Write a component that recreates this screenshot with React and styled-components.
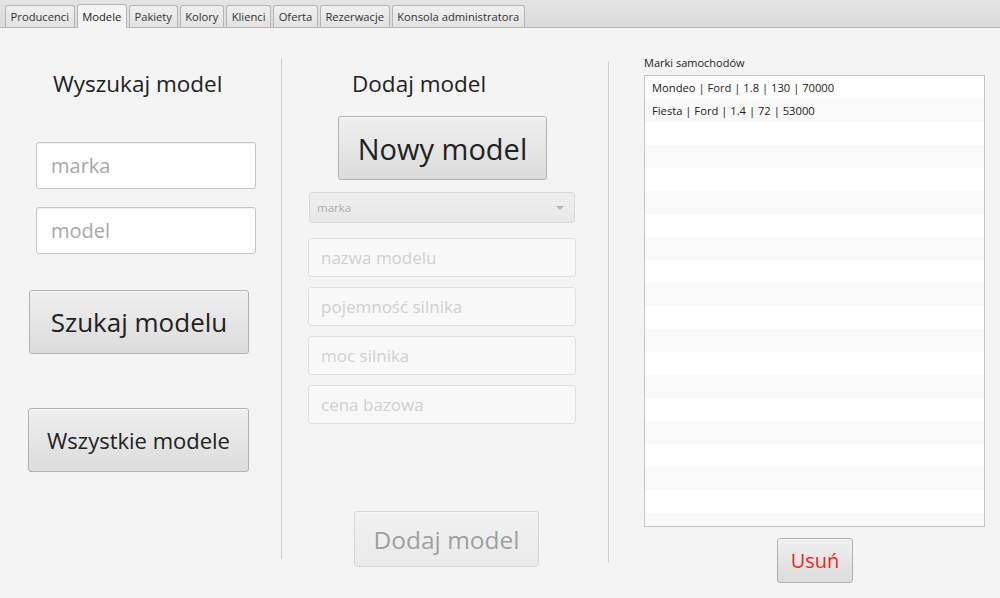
import React from 'react'
import styled, { createGlobalStyle, css } from 'styled-components'

const GlobalStyle = createGlobalStyle`
  html, body {
    margin: 0;
    padding: 0;
    background: #f4f4f4;
    font-family: "Open Sans", "Noto Sans", sans-serif;
    color: #333;
  }
  * { box-sizing: border-box; }
`

const tabs = ['Producenci', 'Modele', 'Pakiety', 'Kolory', 'Klienci', 'Oferta', 'Rezerwacje', 'Konsola administratora']

const rows = [
  'Mondeo | Ford | 1.8 | 130 | 70000',
  'Fiesta | Ford | 1.4 | 72 | 53000',
]

function App() {
  const filler = Array.from({ length: 19 }, (_, i) => i)
  return (
    <Page>
      <GlobalStyle />
      <TabBar>
        {tabs.map((t) => (
          <Tab key={t} active={t === 'Modele'}>{t}</Tab>
        ))}
      </TabBar>
      <Content>
        <LeftCol>
          <Title left={53} top={41}>Wyszukaj model</Title>
          <Field left={36} top={43} h={47} size={20}>marka</Field>
          <Field left={36} top={18} h={47} size={20}>model</Field>
          <Button left={29} top={36} w={220} h={64} size={26}>Szukaj modelu</Button>
          <Button left={28} top={54} w={221} h={64} size={22}>Wszystkie modele</Button>
        </LeftCol>
        <Separator top={30} bottom={38} />
        <MiddleCol>
          <Title left={70} top={41}>Dodaj model</Title>
          <Button left={56} top={17} w={209} h={64} size={29}>Nowy model</Button>
          <Combo>
            <span>marka</span>
            <Arrow />
          </Combo>
          <Disabled>
            <SmallField top={15}>nazwa modelu</SmallField>
            <SmallField top={10}>pojemność silnika</SmallField>
            <SmallField top={10}>moc silnika</SmallField>
            <SmallField top={10}>cena bazowa</SmallField>
          </Disabled>
          <Disabled>
            <Button left={72} top={87} w={185} h={56} size={24.5}>Dodaj model</Button>
          </Disabled>
        </MiddleCol>
        <Separator top={34} bottom={35} />
        <RightCol>
          <ListLabel>Marki samochodów</ListLabel>
          <List>
            {rows.map((r, i) => (
              <Row key={r} odd={i % 2 === 1}>{r}</Row>
            ))}
            {filler.map((i) => (
              <Row key={i} odd={(i + rows.length) % 2 === 1} />
            ))}
          </List>
          <Button left={133} top={11} w={76} h={45} size={20} danger>Usuń</Button>
        </RightCol>
      </Content>
    </Page>
  )
}

export default App

const Page = styled.div`
  width: 1000px;
  height: 598px;
  overflow: hidden;
  background: #f4f4f4;
`

const TabBar = styled.div`
  height: 28px;
  display: flex;
  align-items: flex-end;
  gap: 2px;
  padding-left: 5px;
  background: linear-gradient(#e4e4e4, #dcdcdc);
  border-bottom: 1px solid #b8b8b8;
`

const Tab = styled.div`
  height: 22px;
  padding: 0 4.6px;
  font-size: 11.2px;
  line-height: 21px;
  color: #333;
  border: 1px solid #b5b5b5;
  border-bottom: none;
  border-radius: 3px 3px 0 0;
  background: linear-gradient(#f0f0f0, #e2e2e2);
  ${(p) => p.active && css`
    height: 24px;
    margin-bottom: -1px;
    line-height: 23px;
    background: #f4f4f4;
    color: #222;
  `}
`

const Content = styled.div`
  display: flex;
  height: 569px;
`

const Column = styled.div`
  display: flex;
  flex-direction: column;
  align-items: flex-start;
`

const LeftCol = styled(Column)`
  width: 281px;
`

const MiddleCol = styled(Column)`
  width: 326px;
`

const RightCol = styled(Column)`
  flex: 1;
  padding-left: 35px;
`

const Separator = styled.div`
  width: 1px;
  margin-top: ${(p) => p.top}px;
  margin-bottom: ${(p) => p.bottom}px;
  background: #cfcfcf;
`

const Title = styled.div`
  margin-left: ${(p) => p.left}px;
  margin-top: ${(p) => p.top}px;
  font-size: 22.5px;
  line-height: 30px;
  color: #222;
`

const Field = styled.div`
  margin-left: ${(p) => p.left}px;
  margin-top: ${(p) => p.top}px;
  width: 220px;
  height: ${(p) => p.h}px;
  padding-left: 14px;
  display: flex;
  align-items: center;
  font-size: ${(p) => p.size}px;
  color: #a8a8a8;
  background: #fff;
  border: 1px solid #c4c4c4;
  border-radius: 3px;
  box-shadow: inset 0 1px 1px rgba(0, 0, 0, 0.06);
`

const Button = styled.div`
  margin-left: ${(p) => p.left}px;
  margin-top: ${(p) => p.top}px;
  width: ${(p) => p.w}px;
  height: ${(p) => p.h}px;
  display: flex;
  align-items: center;
  justify-content: center;
  font-size: ${(p) => p.size}px;
  color: ${(p) => (p.danger ? '#ff1a1a' : '#222')};
  background: linear-gradient(#efefef, #dcdcdc);
  border: 1px solid #b0b0b0;
  border-radius: 3px;
  box-shadow: inset 0 1px 0 rgba(255, 255, 255, 0.6);
`

const Disabled = styled.div`
  opacity: 0.4;
  display: flex;
  flex-direction: column;
`

const Combo = styled.div`
  margin-left: 27px;
  margin-top: 12px;
  width: 266px;
  height: 31px;
  padding: 0 10px 0 7px;
  display: flex;
  align-items: center;
  justify-content: space-between;
  font-size: 11.5px;
  color: #a0a0a0;
  background: linear-gradient(#efefef, #e6e6e6);
  border: 1px solid #d6d6d6;
  border-radius: 3px;
  opacity: 0.85;
`

const Arrow = styled.span`
  width: 0;
  height: 0;
  border-left: 4px solid transparent;
  border-right: 4px solid transparent;
  border-top: 4px solid #a8a8a8;
`

const SmallField = styled.div`
  margin-left: 26px;
  margin-top: ${(p) => p.top}px;
  width: 268px;
  height: 39px;
  padding-left: 12px;
  display: flex;
  align-items: center;
  font-size: 17px;
  color: #9a9a9a;
  background: #fff;
  border: 1px solid #c4c4c4;
  border-radius: 3px;
`

const ListLabel = styled.div`
  margin-top: 27px;
  font-size: 11px;
  line-height: 16px;
  color: #222;
`

const List = styled.div`
  margin-top: 4px;
  width: 341px;
  height: 452px;
  overflow: hidden;
  background: #fff;
  border: 1px solid #c4c4c4;
  padding: 0;
`

const Row = styled.div`
  height: 23px;
  padding-left: 7px;
  font-size: 11.2px;
  line-height: 23px;
  color: #222;
  background: ${(p) => (p.odd ? '#f9f9f9' : '#fff')};
`
